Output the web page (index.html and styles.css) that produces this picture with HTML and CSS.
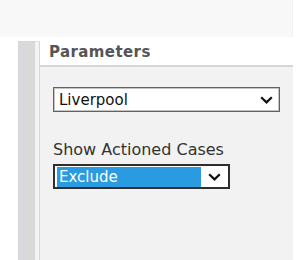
FILE: index.html
```html
<!DOCTYPE html>
<html lang="en">
<head>
  <meta charset="UTF-8">
  <title>Parameters</title>
  <link rel="stylesheet" href="styles.css">
</head>
<body>
  <div class="topbar"></div>

  <div class="main">
    <div class="rail"></div>

    <section class="panel">
      <div class="panel-head">Parameters</div>

      <div class="panel-body">
        <div class="dropdown">
          <span class="dropdown-value">Liverpool</span>
          <svg class="chevron" width="13" height="8" viewBox="0 0 13 8"><path d="M1.2 1.2 L6.5 6.4 L11.8 1.2" fill="none" stroke="#111" stroke-width="2.2"/></svg>
        </div>

        <label class="field-label">Show Actioned Cases</label>
        <div class="dropdown dropdown-focus">
          <span class="dropdown-value">Exclude</span>
          <svg class="chevron" width="13" height="8" viewBox="0 0 13 8"><path d="M1.2 1.2 L6.5 6.4 L11.8 1.2" fill="none" stroke="#111" stroke-width="2.2"/></svg>
        </div>
      </div>
    </section>
  </div>
</body>
</html>
```

FILE: styles.css
```css
body {
  margin: 0;
  background: #fff;
  font-family: "DejaVu Sans", Verdana, sans-serif;
  color: #222;
  height: 260px;
  overflow: hidden;
}

.topbar {
  width: 292px;
  height: 37px;
  background: #f8f8f8;
  border-right: 1px solid #efefef;
}

.main {
  display: flex;
  margin-top: 4px;
  padding-left: 18px;
  height: 219px;
}

.rail {
  width: 16px;
  background: #d9d9d9;
  border: 1px solid #d3d6e3;
  border-right: 4px solid #f3f3f6;
  border-bottom: none;
  box-shadow: 1px 0 0 #d3d6e3;
}

.panel {
  width: 253px;
  margin-left: 1px;
  display: flex;
  flex-direction: column;
}

.panel-head {
  height: 21px;
  padding: 3px 0 0 9px;
  font-size: 15px;
  line-height: 17px;
  letter-spacing: 0.4px;
  font-weight: bold;
  color: #555;
  background: #fff;
  border-bottom: 2px solid #d6d6d6;
}

.panel-body {
  flex: 1;
  background: #f2f2f2;
  padding: 20px 13px 0 13px;
}

.dropdown {
  box-sizing: border-box;
  display: flex;
  align-items: center;
  justify-content: space-between;
  width: 227px;
  height: 25px;
  background: #fff;
  border: 1px solid #626262;
  box-shadow: inset 1px 1px 0 #c4c4c4, inset -1px -1px 0 #c4c4c4;
  font-size: 15px;
  color: #111;
}

.dropdown-value {
  padding-left: 5px;
}

.chevron {
  margin-right: 6px;
}

.field-label {
  display: block;
  margin-top: 28px;
  margin-bottom: 5px;
  font-size: 16px;
  line-height: 19px;
  color: #333;
}

.dropdown-focus {
  width: 177px;
  border: 2px solid #2e2e2e;
  box-shadow: none;
  padding: 1px 2px;
}

.dropdown-focus .dropdown-value {
  flex: 1;
  height: 20px;
  line-height: 20px;
  background: #2a9be0;
  color: #fff;
  padding-left: 2px;
  margin-right: 7px;
}

.dropdown-focus .chevron {
  margin-right: 5px;
}
```
